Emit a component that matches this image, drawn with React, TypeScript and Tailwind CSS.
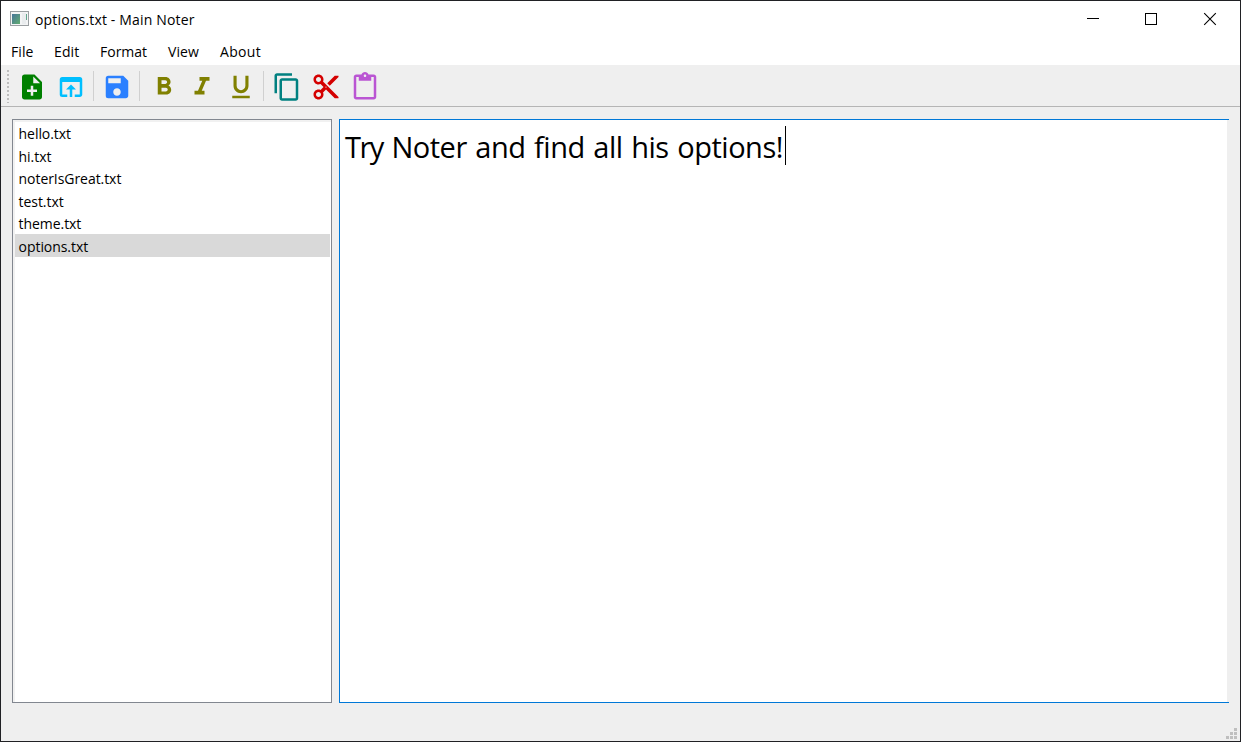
import type { ReactNode } from "react";
import { MdContentCopy, MdContentCut, MdContentPaste, MdFormatBold, MdFormatItalic, MdFormatUnderlined, MdNoteAdd, MdOpenInBrowser, MdSave } from "react-icons/md";

const menus = [
  { label: "File", box: "w-[43px]", spacing: "tracking-[0.1px]" },
  { label: "Edit", box: "w-[46px]", spacing: "tracking-[0.1px]" },
  { label: "Format", box: "w-[68px]", spacing: "tracking-[0px]" },
  { label: "View", box: "w-[52px]", spacing: "tracking-[0.1px]" },
  { label: "About", box: "w-[60px]", spacing: "tracking-[0.3px]" },
];

const files = ["hello.txt", "hi.txt", "noterIsGreat.txt", "test.txt", "theme.txt", "options.txt"];

function Tool({ label, children }: { label: string; children: ReactNode }) {
  return (
    <button aria-label={label} className="flex h-[39px] w-[39px] shrink-0 items-center justify-center pt-[2px]">
      {children}
    </button>
  );
}

function Separator() {
  return (
    <div className="flex w-[7px] shrink-0 justify-center">
      <div className="h-[30px] w-px bg-[#d0d0d0]" />
    </div>
  );
}

function TitleBar() {
  return (
    <div className="flex h-[36px] shrink-0 items-center bg-white pl-[9px]">
      <svg width="19" height="15" viewBox="0 0 19 15" className="-mt-px" shapeRendering="crispEdges">
        <defs>
          <linearGradient id="pane" x1="0" y1="0" x2="1" y2="1">
            <stop offset="0" stopColor="#46759a" />
            <stop offset="1" stopColor="#62ad70" />
          </linearGradient>
        </defs>
        <rect x="0.5" y="0.5" width="18" height="14" fill="#f3f4f5" stroke="#9a9fa2" />
        <rect x="2" y="3" width="8" height="10" fill="url(#pane)" />
        <rect x="12" y="2" width="4" height="11" fill="#e9ecee" />
        <rect x="16" y="3" width="1" height="6" fill="#62a58c" />
      </svg>
      <span className="ml-[6px] pt-px text-[14px] tracking-[0.17px]">options.txt - Main Noter</span>
      <div className="ml-auto flex">
        <svg width="58" height="36" viewBox="0 0 58 36" shapeRendering="crispEdges">
          <path d="M22 17.5h12" stroke="#000" />
        </svg>
        <svg width="58" height="36" viewBox="0 0 58 36" shapeRendering="crispEdges">
          <rect x="22.5" y="12.5" width="11" height="11" fill="none" stroke="#000" />
        </svg>
        <svg width="59" height="36" viewBox="0 0 59 36">
          <path d="M23.2 12.2l11.6 11.6M34.8 12.2L23.2 23.8" stroke="#000" strokeWidth="1.1" />
        </svg>
      </div>
    </div>
  );
}

function Toolbar() {
  return (
    <div className="flex h-[42px] shrink-0 items-center border-b border-[#b5b5b5] pl-[5px]">
      <svg width="3" height="34" viewBox="0 0 3 34" className="mr-[3px] shrink-0" shapeRendering="crispEdges">
        <path d="M2 1v33" stroke="#bdbdbd" strokeWidth="2" strokeDasharray="2 2" />
      </svg>
      <div className="flex items-center pt-px">
        <Tool label="New"><MdNoteAdd size={30} color="#008000" /></Tool>
        <Tool label="Open"><MdOpenInBrowser size={30} color="#00bfff" /></Tool>
        <Separator />
        <Tool label="Save"><MdSave size={30} color="#2b80ff" /></Tool>
        <Separator />
        <Tool label="Bold"><MdFormatBold size={30} color="#808000" className="ml-[2px]" /></Tool>
        <Tool label="Italic"><MdFormatItalic size={30} color="#808000" /></Tool>
        <Tool label="Underline"><MdFormatUnderlined size={30} color="#808000" /></Tool>
        <Separator />
        <Tool label="Copy"><MdContentCopy size={30} color="#008080" /></Tool>
        <Tool label="Cut"><MdContentCut size={30} color="#d40000" /></Tool>
        <Tool label="Paste"><MdContentPaste size={30} color="#ba55d3" /></Tool>
      </div>
    </div>
  );
}

export default function App() {
  return (
    <div className="flex h-[742px] w-[1241px] flex-col overflow-hidden border border-[#202124] bg-[#efefef] font-['Open_Sans','Noto_Sans',sans-serif] text-[14px] text-black">
      <TitleBar />
      <nav className="flex h-[28px] shrink-0 items-center bg-white pl-[10px]">
        {menus.map((m) => (
          <div key={m.label} className={`${m.box} ${m.spacing} whitespace-nowrap`}>{m.label}</div>
        ))}
      </nav>
      <Toolbar />
      <main className="flex h-[596px] shrink-0 gap-[7px] pt-[12px] pl-[11px]">
        <ul className="h-[584px] w-[320px] border border-[#828790] bg-white shadow-[inset_1px_1px_0_1px_#f1f1f1]">
          <li className="h-[1.75px]" />
          {files.map((f) => (
            <li key={f} className={`mr-px ml-[2px] h-[22.5px] pl-[3.6px] leading-[24px] tracking-[-0.06px] odd:leading-[26px] ${f === "options.txt" ? "bg-[#d9d9d9]" : ""}`}>
              {f}
            </li>
          ))}
        </ul>
        <section className="flex h-[584px] w-[890px] flex-col border-y border-[#0078d7]">
          <div className="mr-[2px] flex grow items-start border-l border-[#0078d7] bg-white pt-[6px] pl-[5px]">
            <span className="w-[440px] text-[29px] leading-[42px] tracking-[-0.48px] whitespace-nowrap [word-spacing:1.5px]">
              <span className="tracking-[-1.5px]">Try</span> Noter and find all his options!
            </span>
            <div className="h-[39px] w-px bg-black" />
          </div>
        </section>
      </main>
      <footer className="flex grow items-end justify-end pr-[3px] pb-[2px]">
        <svg width="11" height="11" viewBox="0 0 11 11" fill="#bfbfbf" shapeRendering="crispEdges">
          <path d="M8 0h3v3h-3zM4 4h3v3h-3zM8 4h3v3h-3zM0 8h3v3h-3zM4 8h3v3h-3zM8 8h3v3h-3z" />
        </svg>
      </footer>
    </div>
  );
}
